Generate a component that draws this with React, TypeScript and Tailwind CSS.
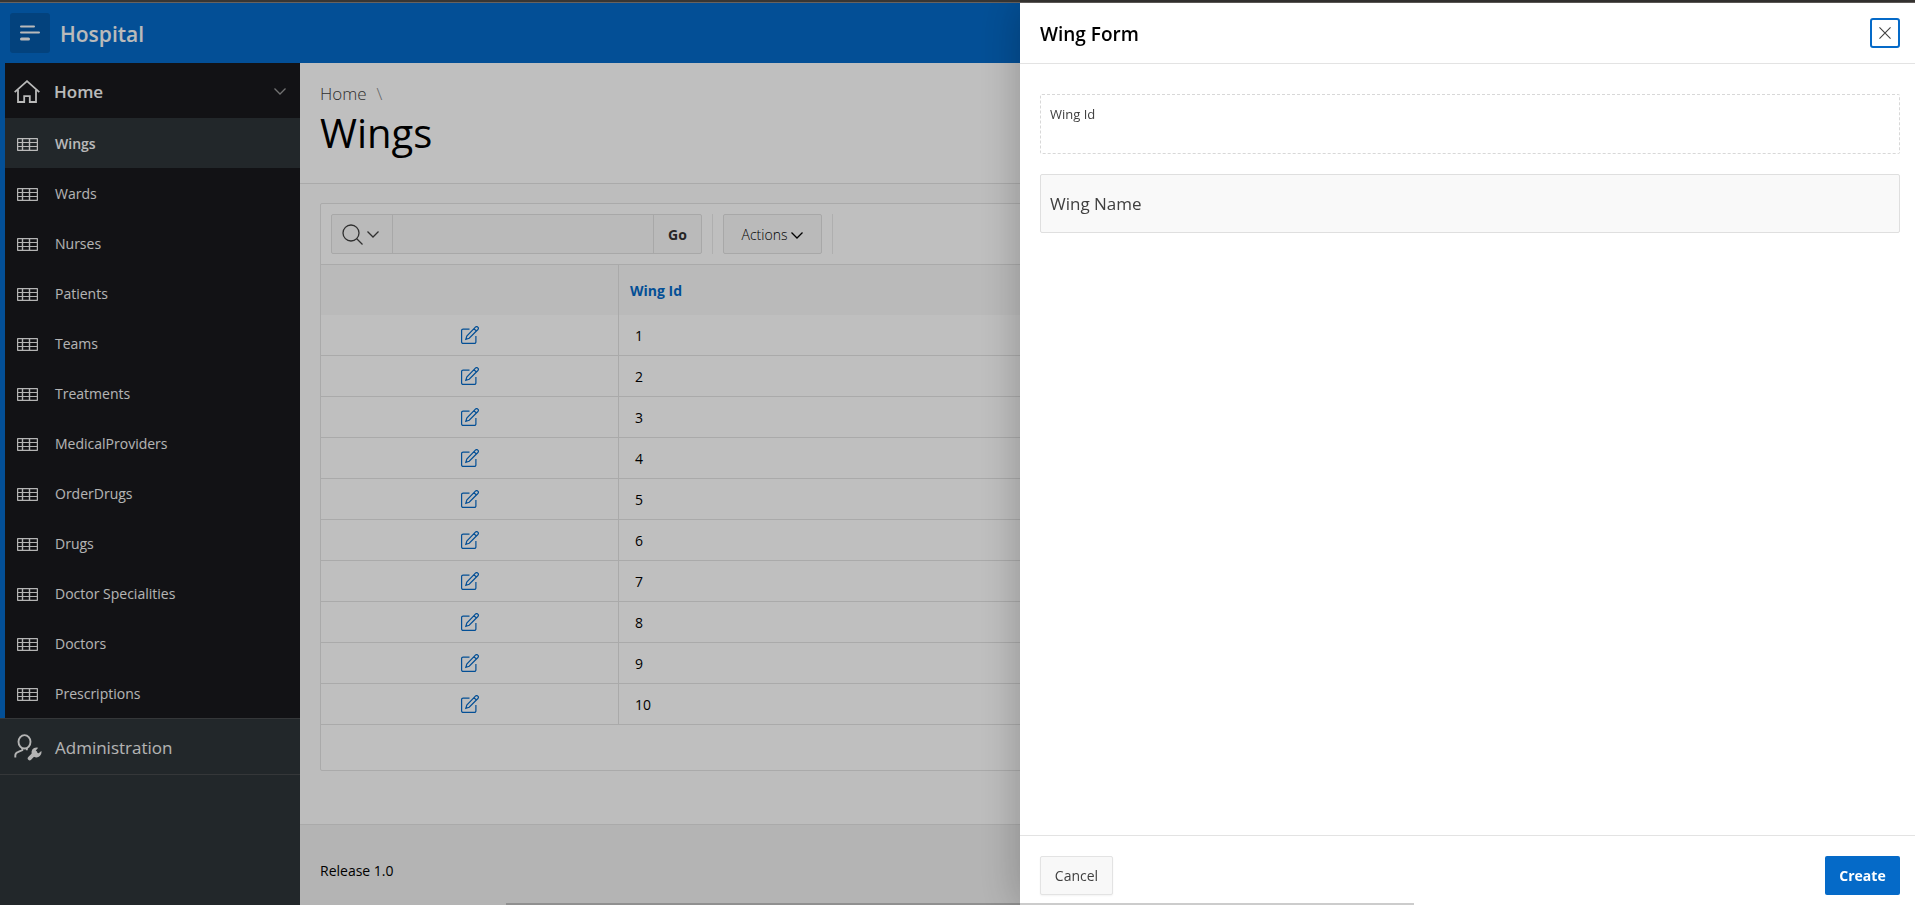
import { useState } from "react";

const navItems = [
  "Wings",
  "Wards",
  "Nurses",
  "Patients",
  "Teams",
  "Treatments",
  "MedicalProviders",
  "OrderDrugs",
  "Drugs",
  "Doctor Specialities",
  "Doctors",
  "Prescriptions",
];

const wings = [1, 2, 3, 4, 5, 6, 7, 8, 9, 10];

function Chevron({ className = "" }: { className?: string }) {
  return (
    <svg className={className} width="12" height="7" viewBox="0 0 12 7" fill="none" stroke="currentColor" strokeWidth="1.3" aria-hidden="true">
      <path d="M.5.5 6 6 11.5.5" />
    </svg>
  );
}

function TableIcon() {
  return (
    <svg width="21" height="13" viewBox="0 0 21 13" fill="none" stroke="currentColor" aria-hidden="true">
      <rect x=".6" y=".6" width="19.8" height="11.8" rx=".5" strokeWidth="1.3" />
      <path d="M1 4.500h19M1 8.500h19" strokeWidth="1.2" />
      <path d="M5.500 1v11M12.500 1v11" strokeWidth="1.4" />
    </svg>
  );
}

function HomeIcon() {
  return (
    <svg width="26" height="23" viewBox="0 0 26 23" fill="none" stroke="currentColor" strokeWidth="1.800" aria-hidden="true">
      <path d="M.7 12.2 13 1.2l12.3 11" />
      <path d="M4 10v12h6.200v-5.800h5.600V22H22V10" />
    </svg>
  );
}

function UserWrenchIcon() {
  return (
    <svg width="28" height="27" viewBox="0 0 28 27" fill="none" stroke="currentColor" aria-hidden="true">
      <ellipse cx="10.500" cy="7.800" rx="6" ry="6.700" strokeWidth="1.900" />
      <path d="M1.300 23.500v-2c0-2 1-3 3-3.700l4-1.700v-2.200M12.800 13.900v2.400" strokeWidth="1.900" />
      <path d="m15.700 24.300 5.600-5.600" strokeWidth="4" strokeLinecap="round" />
      <path d="M24.200 13.700a5 5 0 1 0 3.300 4.600c0-.5 0-.8-.2-1.200l-2.600 2.100-2.400-.5-.5-2.300z" fill="currentColor" stroke="none" />
    </svg>
  );
}

function EditIcon() {
  return (
    <svg width="18" height="18" viewBox="0 0 18 18" fill="none" stroke="currentColor" strokeWidth="1.200" aria-hidden="true">
      <path d="M8.500 3.100H2.100A1.500 1.500 0 0 0 .6 4.600v11.300a1.500 1.500 0 0 0 1.500 1.500h11.300a1.500 1.500 0 0 0 1.500-1.500V10" />
      <path d="m4.800 13.300 1-3.300 8.600-8.800c1.600-1.600 4 .6 2.500 2.300L8.200 12.200zM13 2.700l2.500 2.400" />
    </svg>
  );
}

export default function App() {
  const [wingName, setWingName] = useState("");

  return (
    <div className="flex min-h-screen flex-col bg-[#fdfdfd] font-['Open_Sans','Noto_Sans',sans-serif] text-[14px] leading-5 text-black">
      <div className="h-[3px] border-b border-[#666260] bg-[#383634]" />
      <header className="flex h-[60px] items-center gap-[10px] bg-[#056ac8] px-[10px] text-[#f9f9f9]">
        <button type="button" aria-label="Toggle navigation" className="flex size-10 items-center justify-center rounded-[3px] bg-[#0459a7]">
          <svg width="20" height="16" viewBox="0 0 20 16" fill="none" stroke="currentColor" strokeWidth="2" strokeLinecap="round" aria-hidden="true">
            <path d="M1 1.500h13M1 7.500h18" />
            <path d="M1.500 14h7" strokeWidth="3" />
          </svg>
        </button>
        <a href="#" className="pt-0.5 text-[21px] leading-7 font-semibold">Hospital</a>
      </header>

      <div className="flex flex-1">
        <nav aria-label="Main" className="w-[300px] shrink-0 bg-[#2e3539] text-[#f0f0f0]">
          <div className="border-l-5 border-[#056ac8] bg-[#18191d]">
            <div className="flex h-[55px] items-center gap-3 pt-0.5 pr-[14px] pl-[9px] text-[#f9f9f9]">
              <a href="#" className="flex flex-1 items-center gap-[14px] text-[17px] font-semibold">
                <HomeIcon />
                Home
              </a>
              <button type="button" aria-label="Collapse Home" className="text-[#999]">
                <Chevron />
              </button>
            </div>
            <ul>
              {navItems.map((item, i) => (
                <li key={item}>
                  <a
                    href="#"
                    className={
                      i === 0
                        ? "flex h-[50px] items-center gap-[17px] bg-[#2e3539] pt-0.5 pl-3 font-semibold text-[#f9f9f9]"
                        : "flex h-[50px] items-center gap-[17px] pt-0.5 pl-3"
                    }
                  >
                    <TableIcon />
                    {item}
                  </a>
                </li>
              ))}
            </ul>
          </div>
          <a href="#" className="flex h-[57px] items-center gap-[13px] border-y border-[#474a4d] pt-0.5 pl-[14px] text-[17px]">
            <UserWrenchIcon />
            Administration
          </a>
        </nav>

        <main className="flex min-w-0 flex-1 flex-col">
          <div className="border-b border-[#e3e3e3] bg-white px-5 pt-5 pb-6">
            <nav aria-label="Breadcrumb" className="flex gap-[10px] text-[17px] leading-[22px] font-light text-[#404040]">
              <a href="#">Home</a>
              <span className="text-[#888]">\</span>
            </nav>
            <h1 className="pt-1 pb-0.5 text-[40px] leading-[48px] font-medium">Wings</h1>
          </div>

          <div className="mx-5 mt-[19px] mb-[53px] rounded-[2px] border border-[#e3e3e3] bg-white">
            <div className="flex h-[60px] items-center px-[10px]">
              <div className="flex h-10 rounded-[2px] border border-[#e0e0e0] bg-[#f9f9f9]">
                <button type="button" aria-label="Select columns to search" className="flex w-[61px] items-center gap-1 border-r border-[#e0e0e0] pl-[10px] text-[#404040]">
                  <svg width="21" height="21" viewBox="0 0 21 21" fill="none" stroke="currentColor" strokeWidth="1.300" aria-hidden="true">
                    <circle cx="9" cy="9" r="8" />
                    <path d="m14.500 14.500 6 6" />
                  </svg>
                  <Chevron />
                </button>
                <input type="text" aria-label="Search" className="w-[260px] bg-transparent px-2 outline-none" />
                <button type="button" className="w-12 border-l border-[#e0e0e0] pt-0.5 font-bold text-[#333]">Go</button>
              </div>
              <div className="mx-[10px] h-10 w-px bg-[#eaeaea]" />
              <button type="button" className="flex h-10 w-[99px] items-center justify-center gap-1 rounded-[2px] border border-[#e0e0e0] bg-[#f9f9f9] pt-0.5 font-light text-black">
                Actions
                <Chevron />
              </button>
              <div className="mx-[10px] h-10 w-px bg-[#eaeaea]" />
            </div>
            <table className="w-full table-fixed border-separate border-spacing-0 border-t border-[#e3e3e3]">
              <thead>
                <tr className="h-[50px] bg-[#f9f9f9]">
                  <th aria-label="Edit" className="w-[298px] border-r border-[#e3e3e3]" />
                  <th className="px-[11px] pt-0.5 text-left font-bold text-[#056ac8]">
                    <a href="#">Wing Id</a>
                  </th>
                </tr>
              </thead>
              <tbody>
                {wings.map((id) => (
                  <tr key={id} className="h-[41px]">
                    <td className="border-r border-b border-[#e3e3e3]">
                      <a href="#" aria-label={"Edit wing " + id} className="flex justify-center text-[#056ac8]">
                        <EditIcon />
                      </a>
                    </td>
                    <td className="border-b border-[#e3e3e3] px-4 pt-0.5">{id}</td>
                  </tr>
                ))}
              </tbody>
            </table>
            <div className="h-[45px]" />
          </div>

          <footer className="flex-1 border-t border-[#e3e3e3] bg-[#f0f0f0] px-5 pt-9 pb-6">Release 1.0</footer>
        </main>
      </div>

      <div className="fixed inset-x-0 top-[3px] bottom-0 bg-black/25" />
      <section
        role="dialog"
        aria-labelledby="wing-form-title"
        className="fixed top-[3px] right-0 bottom-0 flex w-full max-w-[895px] flex-col bg-white shadow-[0_0_40px_rgba(0,0,0,0.25)]"
      >
        <div className="flex h-[61px] shrink-0 items-center justify-between border-b border-[#e3e3e3] pr-[15px] pl-5">
          <h2 id="wing-form-title" className="pt-0.5 text-[19px] leading-6 font-semibold">Wing Form</h2>
          <button type="button" aria-label="Close" className="flex size-[30px] items-center justify-center rounded-[3px] border-2 border-[#056ac8] text-[#404040]">
            <svg width="12" height="12" viewBox="0 0 13 13" stroke="currentColor" strokeWidth="1.200" aria-hidden="true">
              <path d="m.5.5 12 12M12.500.5l-12 12" />
            </svg>
          </button>
        </div>
        <div className="flex flex-1 flex-col gap-5 py-[30px] pr-[15px] pl-5 text-[#404040]">
          <div className="h-[60px] rounded-[2px] border border-dashed border-[#d8d8d8] px-[9px] pt-[9px] text-[13px]">
            <span>Wing Id</span>
          </div>
          <div className="relative h-[59px]">
            <input
              id="wing-name"
              type="text"
              value={wingName}
              onChange={(e) => setWingName(e.target.value)}
              placeholder=" "
              className="peer size-full rounded-[2px] border border-[#dfdfdf] bg-[#f9f9f9] px-[9px] pt-4 text-[17px] outline-none"
            />
            <label
              htmlFor="wing-name"
              className="pointer-events-none absolute top-1 left-[10px] text-[13px] peer-placeholder-shown:top-5 peer-placeholder-shown:text-[17px]"
            >
              Wing Name
            </label>
          </div>
        </div>
        <div className="flex h-[70px] shrink-0 items-start justify-between border-t border-[#e3e3e3] pt-5 pr-[15px] pl-5">
          <button type="button" className="h-[39px] w-[73px] rounded-[2px] border border-[#e3e3e3] bg-[#f8f8f8] text-[#404040] shadow-xs">Cancel</button>
          <button type="button" className="h-[39px] w-[75px] rounded-[2px] bg-[#056ac8] font-bold text-white">Create</button>
        </div>
      </section>
      <div className="pointer-events-none fixed bottom-0 left-[506px] h-[2px] w-[908px] bg-black/20" />
    </div>
  );
}
